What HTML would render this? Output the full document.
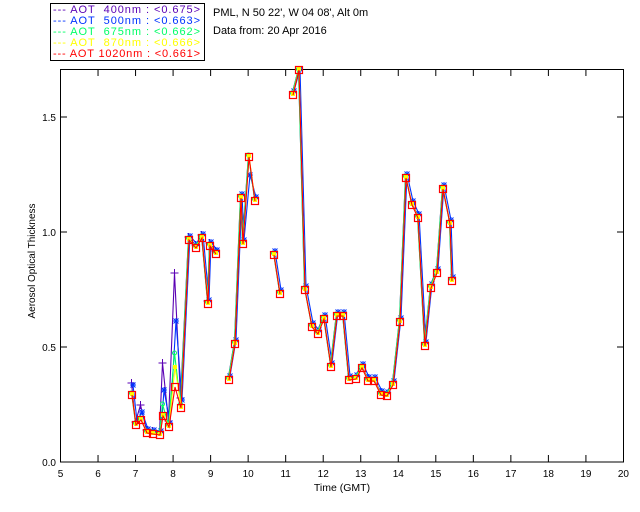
<!DOCTYPE html>
<html><head><meta charset="utf-8"><style>
html,body{margin:0;padding:0;background:#fff;width:640px;height:512px;overflow:hidden}
svg{display:block;font-family:"Liberation Sans",sans-serif}
</style></head><body>
<svg id="s" width="640" height="512" xmlns="http://www.w3.org/2000/svg">
<rect x="50.5" y="3.5" width="154" height="57" fill="#fff" stroke="#000"/>
<g font-size="11">
<text x="53" y="13" fill="#5a00b4" textLength="147" lengthAdjust="spacing">--- AOT&#160;&#160;400nm : &lt;0.675&gt;</text>
<text x="53" y="24" fill="#0033ff" textLength="147" lengthAdjust="spacing">--- AOT&#160;&#160;500nm : &lt;0.663&gt;</text>
<text x="53" y="35" fill="#00ff66" textLength="147" lengthAdjust="spacing">--- AOT&#160;&#160;675nm : &lt;0.662&gt;</text>
<text x="53" y="46" fill="#ffff00" textLength="147" lengthAdjust="spacing">--- AOT&#160;&#160;870nm : &lt;0.666&gt;</text>
<text x="53" y="57" fill="#ff0000" textLength="147" lengthAdjust="spacing">--- AOT 1020nm : &lt;0.661&gt;</text>
<text x="213" y="16" fill="#000">PML, N 50 22', W 04 08', Alt 0m</text>
<text x="213" y="34" fill="#000">Data from: 20 Apr 2016</text>
</g>
<rect x="60.5" y="69.5" width="563" height="392.5" fill="none" stroke="#000"/>
<g id="ax" font-size="10" fill="#000"></g>
<text x="342" y="491" font-size="10.5" text-anchor="middle">Time (GMT)</text>
<text transform="translate(35,261) rotate(-90)" font-size="10" text-anchor="middle" textLength="115" lengthAdjust="spacing">Aerosol Optical Thickness</text>
<g id="d"></g>
</svg>
<script>
var NS="http://www.w3.org/2000/svg",ax=document.getElementById("ax"),d=document.getElementById("d");
function el(t,a,p){var e=document.createElementNS(NS,t);for(var k in a)e.setAttribute(k,a[k]);(p||d).appendChild(e);return e;}
for(var h=5;h<=20;h++){var x=60.5+(h-5)*37.53;
 if(h>5&&h<20){el("line",{x1:x,y1:462,x2:x,y2:455,stroke:"#000"},ax);el("line",{x1:x,y1:69,x2:x,y2:76,stroke:"#000"},ax);}
 var t=el("text",{x:x,y:477,"text-anchor":"middle"},ax);t.textContent=h;}
[[0,"0.0"],[0.5,"0.5"],[1,"1.0"],[1.5,"1.5"]].forEach(function(v){var y=462-v[0]*230;
 if(v[0]>0){el("line",{x1:60,y1:y,x2:67,y2:y,stroke:"#000"},ax);el("line",{x1:624,y1:y,x2:617,y2:y,stroke:"#000"},ax);}
 var t=el("text",{x:56,y:y+4,"text-anchor":"end"},ax);t.textContent=v[1];});
var segs=[
[[132,395],[136,425],[141,420],[147,433],[153,434],[160,435],[163,416],[169,427],[175,387],[181,408],[189,240],[196,248],[202,238],[208,304],[210,246],[216,254]],
[[229,380],[235,344],[241,198],[243,244],[249,157],[255,201]],
[[274,255],[280,294]],
[[293,95],[299,70],[305,290],[312,327],[318,334],[324,319],[331,367],[337,316],[343,316],[349,380],[356,379],[362,368],[368,381],[374,381],[381,395],[387,396],[393,385],[400,322],[406,178],[412,205],[418,218],[425,346],[431,288],[437,273],[443,189],[450,224],[452,281]]];
var ov={0:{0:-12,2:-15,6:-53,7:-6,8:-114,9:-10},1:{0:-10,2:-8,6:-26,8:-66,9:-8},2:{6:-12,8:-34,9:-4},3:{8:-20}};
var series=[["#5a00b4",-0.5,-3],["#0033ff",1,-4],["#00ff66",-0.5,-2],["#ffff00",0,-1],["#ff0000",0,0]];
series.forEach(function(s,si){segs.forEach(function(seg,gi){
 var pts=seg.map(function(p,i){var y=p[1]+s[2];
  if(gi==0&&ov[si]&&ov[si][i]!==undefined)y=p[1]+ov[si][i];
  if(gi==1&&si==1&&i==4)y=p[1]+18;
  return [p[0]+s[1],Math.max(69,y)];});
 el("polyline",{points:pts.map(function(p){return p.join(",")}).join(" "),fill:"none",stroke:s[0],"stroke-width":1.1});
 pts.forEach(function(p){var x=p[0],y=p[1];
  if(si==4)el("rect",{x:x-3.5,y:y-3.5,width:7,height:7,fill:"none",stroke:"#ff0000","stroke-width":1.2});
  else if(si==1){el("path",{d:"M"+(x-3)+" "+y+"h6M"+x+" "+(y-3)+"v6M"+(x-2.5)+" "+(y-2.5)+"l5 5M"+(x+2.5)+" "+(y-2.5)+"l-5 5",stroke:"#0033ff","stroke-width":1});}
  else if(si==0&&gi==0)el("path",{d:"M"+(x-4)+" "+y+"h8M"+x+" "+(y-4)+"v8",stroke:"#5a00b4","stroke-width":1});
  else if(si==2)el("circle",{cx:x,cy:y,r:2,fill:"none",stroke:"#00ff66","stroke-width":1});
  else if(si==3)el("rect",{x:x-2,y:y-2,width:4,height:4,fill:"#ffff00"});
 });});});
</script>
</body></html>
